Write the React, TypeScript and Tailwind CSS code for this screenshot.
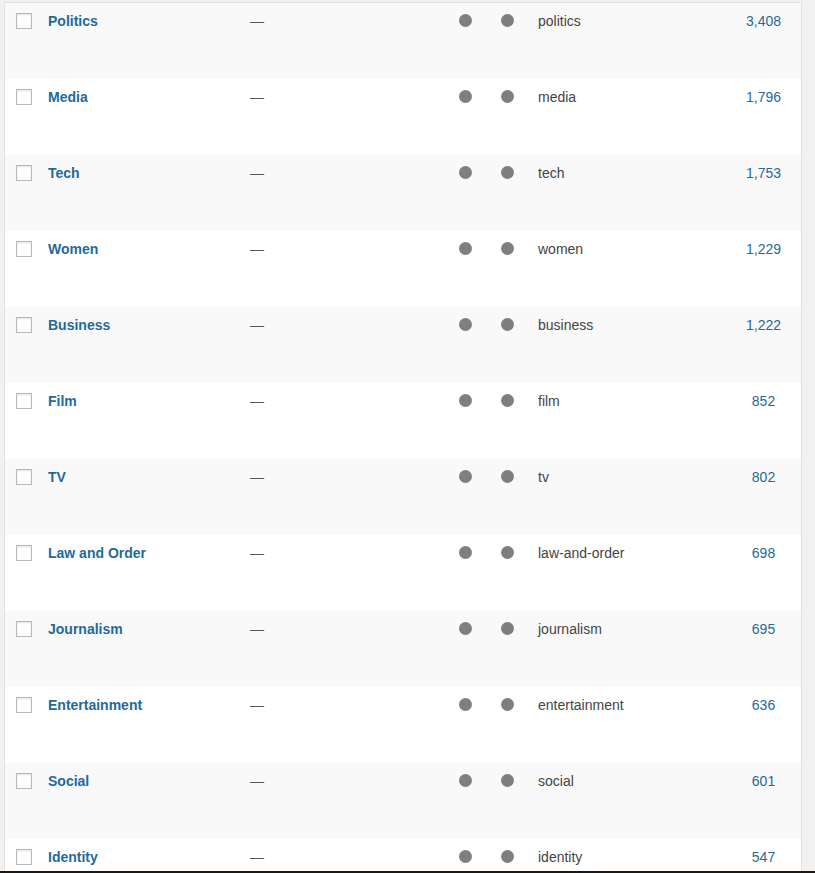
import React from "react";

const rows = [
  { name: "Politics", slug: "politics", count: "3,408" },
  { name: "Media", slug: "media", count: "1,796" },
  { name: "Tech", slug: "tech", count: "1,753" },
  { name: "Women", slug: "women", count: "1,229" },
  { name: "Business", slug: "business", count: "1,222" },
  { name: "Film", slug: "film", count: "852" },
  { name: "TV", slug: "tv", count: "802" },
  { name: "Law and Order", slug: "law-and-order", count: "698" },
  { name: "Journalism", slug: "journalism", count: "695" },
  { name: "Entertainment", slug: "entertainment", count: "636" },
  { name: "Social", slug: "social", count: "601" },
  { name: "Identity", slug: "identity", count: "547" },
];

function Dot() {
  return <span className="block w-[13px] h-[13px] rounded-full bg-[#7f7f7f]" />;
}

export default function App() {
  return (
    <div
      className="h-screen flex flex-col bg-[#f1f1f1] overflow-hidden"
      style={{ fontFamily: '"Liberation Sans", Arial, sans-serif' }}
    >
      <div className="flex-1 overflow-hidden pt-[2px] pl-[4px] pr-[13px]">
        <div className="border border-b-0 border-[#e1e1e1] bg-white">
          {rows.map((r, i) => (
            <div
              key={r.slug}
              className={`flex h-[76px] ${i % 2 === 0 ? "bg-[#f9f9f9]" : "bg-white"}`}
            >
              <div className="w-[43px] pl-[11px] pt-[10px]">
                <span className="block w-4 h-4 border border-[#b4b9be] bg-white shadow-[inset_0_1px_2px_rgba(0,0,0,0.1)]" />
              </div>
              <div className="w-[202px] pt-[8px] text-[14px] leading-5 font-bold text-[#1f6a99]">
                {r.name}
              </div>
              <div className="w-[203px] pt-[8px] text-[14px] leading-5 text-[#555]">
                —
              </div>
              <div className="w-[42px] pl-[6px] pt-[11px]">
                <Dot />
              </div>
              <div className="w-[37px] pl-[6px] pt-[11px]">
                <Dot />
              </div>
              <div className="w-[194px] pl-[6px] pt-[8px] text-[14px] leading-5 text-[#444]">
                {r.slug}
              </div>
              <div className="flex-1 pt-[8px] text-[14px] leading-5 text-center text-[#1f6a99]">
                {r.count}
              </div>
            </div>
          ))}
        </div>
      </div>
      <div className="h-[2px] bg-[#1b1714]" />
    </div>
  );
}
